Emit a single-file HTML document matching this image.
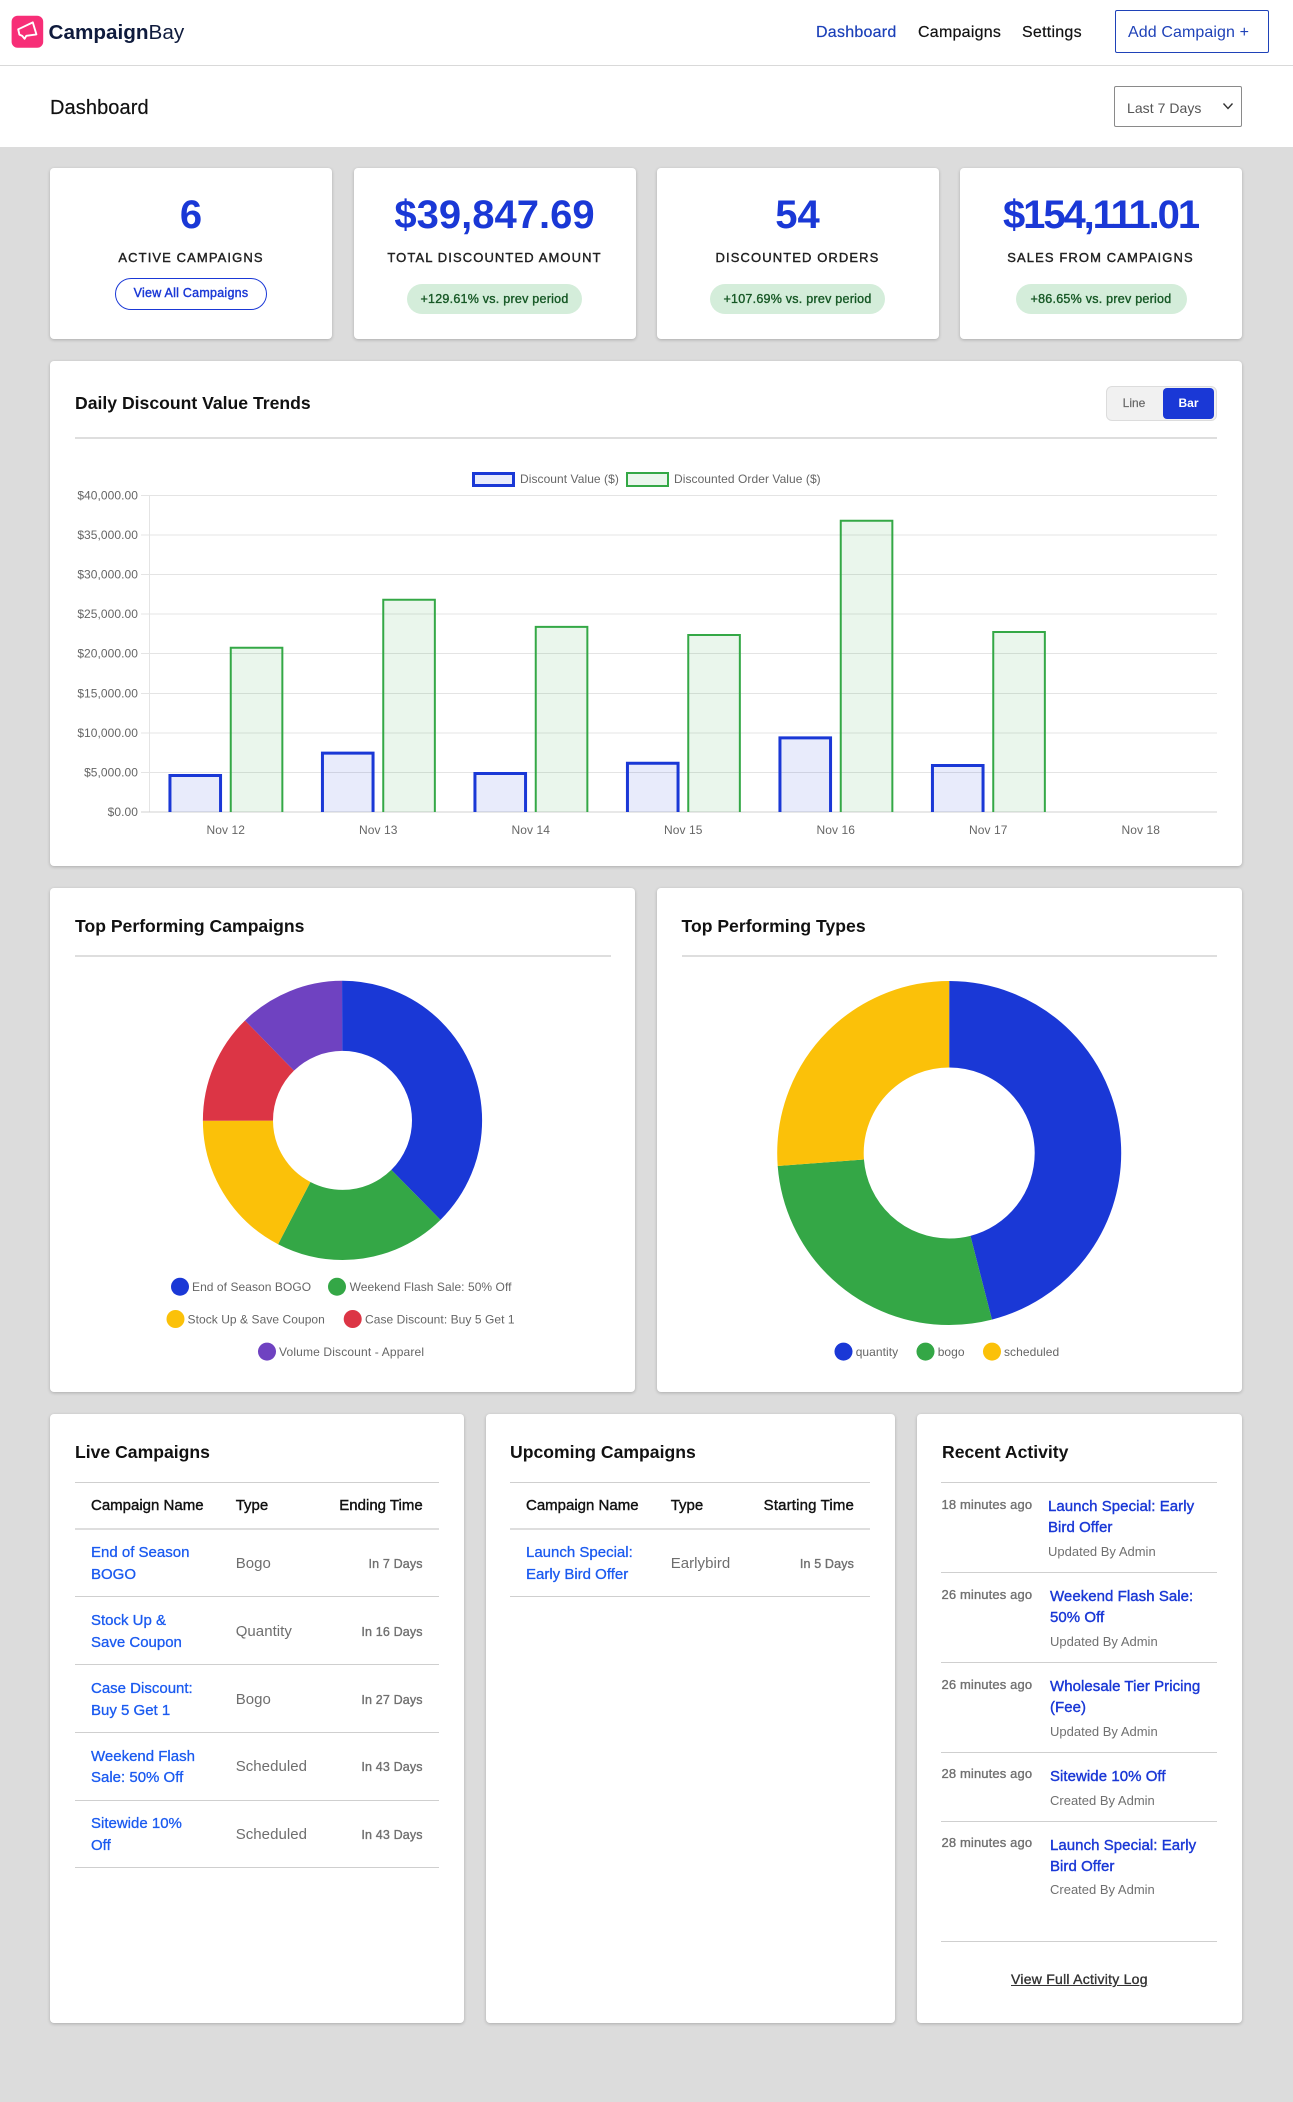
<!DOCTYPE html>
<html><head><meta charset="utf-8"><title>Dashboard</title>
<style>
html,body{margin:0;padding:0}
body{width:1293px;height:2102px;background:#dcdcdc;position:relative;overflow:hidden;font-family:"Liberation Sans",sans-serif;color:#111;filter:blur(.3px)}
.b{position:absolute;box-sizing:border-box}
.card{position:absolute;box-sizing:border-box;background:#fff;border-radius:4px;box-shadow:0 1px 3px rgba(0,0,0,.22)}
.t{position:absolute;white-space:nowrap;line-height:20px}
.c{transform:translateX(-50%)}
.r{transform:translateX(-100%)}
.num{font-size:40px;font-weight:700;color:#1a38d6;line-height:40px}
.lab{font-size:13px;letter-spacing:1.1px;color:#222;-webkit-text-stroke:.4px #222}
.pill{position:absolute;background:#d4edda;border-radius:15px;height:30px;top:284px;text-align:center;line-height:30px;font-size:12.5px;color:#155724;-webkit-text-stroke:.35px #155724;letter-spacing:.25px;white-space:nowrap}
.h{font-size:17.6px;font-weight:700;color:#111}
.hr{position:absolute;height:2px;background:#dedede}
.ln{position:absolute;height:1px;background:#cfcfcf}
.th{font-size:15px;color:#111;-webkit-text-stroke:.4px #111}
.lk{font-size:15px;color:#1a5af0;-webkit-text-stroke:.3px #1a5af0;margin-top:1px}
.ty{font-size:15px;color:#6e6e6e;letter-spacing:.05px;margin-top:1px}
.tm{font-size:12.5px;color:#707070;-webkit-text-stroke:.35px #707070;letter-spacing:.15px}
.at{font-size:13px;color:#707070;-webkit-text-stroke:.35px #707070;letter-spacing:.13px}
.al{font-size:15px;color:#1a38d6;-webkit-text-stroke:.4px #1a38d6;letter-spacing:.05px;margin-top:1px}
.as{font-size:13px;color:#707070;margin-top:1px}
svg text{font-family:"Liberation Sans",sans-serif;font-size:12px;fill:#666;letter-spacing:.06px}
.nav{position:absolute;white-space:nowrap;line-height:20px;top:23px;font-size:16px;letter-spacing:.25px}
</style></head><body>

<!-- header -->
<div class="b" style="left:0;top:0;width:1293px;height:147px;background:#fff"></div>
<div class="b" style="left:0;top:65px;width:1293px;height:1px;background:#d9d9d9"></div>
<svg class="b" style="left:11px;top:15px" width="33" height="33" viewBox="11 15 33 33">
<rect x="11.6" y="15.7" width="31.6" height="32" rx="6" fill="#f72e77"/>
<path d="M18.2 29.3 L32.8 22.4 L36.4 34.4 L26.3 35.8 L24.6 38.8 L22.2 35.9 L19.4 34.6 Z" fill="none" stroke="#fff" stroke-width="1.9" stroke-linejoin="round"/>
</svg>
<div class="t" style="left:48.5px;top:21px;font-size:20.7px;line-height:24px;color:#0f1b3d;font-weight:700">Campaign<span style="font-weight:400">Bay</span></div>
<div class="nav" style="left:816px;color:#1a3fb8;-webkit-text-stroke:.2px #1a3fb8">Dashboard</div>
<div class="nav" style="left:918px;color:#111;-webkit-text-stroke:.2px #111">Campaigns</div>
<div class="nav" style="left:1022px;color:#111;-webkit-text-stroke:.2px #111">Settings</div>
<div class="b" style="left:1114.5px;top:10px;width:154px;height:43px;border:1.5px solid #1f42b8;border-radius:2px"></div>
<div class="t" style="left:1128px;top:23px;font-size:16px;color:#1f42b8;letter-spacing:.1px">Add Campaign +</div>
<div class="t" style="left:50px;top:96px;font-size:20px;line-height:24px;color:#111;-webkit-text-stroke:.2px #111;letter-spacing:.1px">Dashboard</div>
<div class="b" style="left:1114px;top:86px;width:128px;height:41px;border:1px solid #8a8a8a;border-radius:2px;background:#fff"></div>
<div class="t" style="left:1127px;top:98px;font-size:14px;color:#555;letter-spacing:.05px">Last 7 Days</div>
<svg class="b" style="left:1222px;top:102px" width="12" height="9"><path d="M1.5 1.5 L6 6.5 L10.5 1.5" fill="none" stroke="#333" stroke-width="1.4"/></svg>

<!-- stat cards -->
<div class="card" style="left:50px;top:168px;width:282px;height:171px"></div>
<div class="card" style="left:354px;top:168px;width:281.5px;height:171px"></div>
<div class="card" style="left:657px;top:168px;width:281.5px;height:171px"></div>
<div class="card" style="left:960px;top:168px;width:281.5px;height:171px"></div>

<div class="t num c" style="left:191px;top:195px">6</div>
<div class="t num c" style="left:494.5px;top:195px">$39,847.69</div>
<div class="t num c" style="left:797.5px;top:195px">54</div>
<div class="t num c" style="left:1100.5px;top:195px;letter-spacing:-2.1px">$154,111.01</div>
<div class="t lab c" style="left:191px;top:248px">ACTIVE CAMPAIGNS</div>
<div class="t lab c" style="left:494.5px;top:248px">TOTAL DISCOUNTED AMOUNT</div>
<div class="t lab c" style="left:797.5px;top:248px">DISCOUNTED ORDERS</div>
<div class="t lab c" style="left:1100.5px;top:248px">SALES FROM CAMPAIGNS</div>
<div class="b" style="left:115px;top:278px;width:152px;height:32px;border:1.5px solid #1a38d6;border-radius:16px;text-align:center;line-height:29px;font-size:12.5px;letter-spacing:.25px;color:#1a38d6;-webkit-text-stroke:.4px #1a38d6">View All Campaigns</div>
<div class="pill" style="left:407px;width:175px">+129.61% vs. prev period</div>
<div class="pill" style="left:710px;width:175px">+107.69% vs. prev period</div>
<div class="pill" style="left:1015.5px;width:171px">+86.65% vs. prev period</div>

<!-- chart card -->
<div class="card" style="left:50px;top:361px;width:1191.5px;height:504.5px"></div>
<div class="t h" style="left:75px;top:393px">Daily Discount Value Trends</div>
<div class="hr" style="left:75px;top:437px;width:1142px"></div>
<div class="b" style="left:1106px;top:385.5px;width:110.5px;height:35.5px;background:#f1f1f1;border:1px solid #dcdcdc;border-radius:6px"></div>
<div class="b" style="left:1163px;top:388px;width:51px;height:30.5px;background:#1a38d6;border-radius:4px;text-align:center;line-height:30px;font-size:12px;font-weight:700;color:#fff">Bar</div>
<div class="t c" style="left:1134px;top:393px;font-size:12px;color:#666;-webkit-text-stroke:.2px #666">Line</div>

<!-- mid cards -->
<div class="card" style="left:50px;top:887.5px;width:585px;height:504.5px"></div>
<div class="card" style="left:657px;top:887.5px;width:584.5px;height:504.5px"></div>
<div class="t h" style="left:75px;top:915.5px">Top Performing Campaigns</div>
<div class="t h" style="left:681.5px;top:915.5px">Top Performing Types</div>
<div class="hr" style="left:75px;top:955px;width:535.5px"></div>
<div class="hr" style="left:681.5px;top:955px;width:535.5px"></div>

<!-- svg charts -->
<svg class="b" style="left:0;top:0" width="1293" height="2102" viewBox="0 0 1293 2102">
<g stroke="#e4e4e4" stroke-width="1">
<path d="M141 495.5H1217M141 535H1217M141 574.5H1217M141 614H1217M141 653.5H1217M141 693.5H1217M141 733H1217M141 772.5H1217"/>
<path d="M149.5 495V812"/>
</g>
<path d="M141 812H1217" stroke="#d0d0d0" stroke-width="1"/>
<g fill="rgba(26,56,214,.1)" stroke="#1a38d6" stroke-width="3">
<path d="M169.95 812V775.5H220.55V812"/>
<path d="M322.45 812V753.1H373.05V812"/>
<path d="M474.95 812V773.5H525.55V812"/>
<path d="M627.45 812V763.3H678.05V812"/>
<path d="M779.95 812V737.9H830.55V812"/>
<path d="M932.45 812V765.5H983.05V812"/>
</g>
<g fill="rgba(52,168,70,.1)" stroke="#34a846" stroke-width="2">
<path d="M230.75 812V647.8H282.35V812"/>
<path d="M383.25 812V599.8H434.85V812"/>
<path d="M535.75 812V626.9H587.35V812"/>
<path d="M688.25 812V635H739.85V812"/>
<path d="M840.75 812V520.7H892.35V812"/>
<path d="M993.25 812V632H1044.85V812"/>
</g>
<rect x="473.5" y="473.5" width="40" height="12" fill="rgba(26,56,214,.1)" stroke="#1a38d6" stroke-width="3"/>
<rect x="627" y="473" width="41" height="13" fill="rgba(52,168,70,.1)" stroke="#34a846" stroke-width="2"/>
<text x="520" y="483">Discount Value ($)</text>
<text x="674" y="483">Discounted Order Value ($)</text>
<g text-anchor="end">
<text x="138" y="499.5">$40,000.00</text>
<text x="138" y="539">$35,000.00</text>
<text x="138" y="578.5">$30,000.00</text>
<text x="138" y="618">$25,000.00</text>
<text x="138" y="657.5">$20,000.00</text>
<text x="138" y="697.5">$15,000.00</text>
<text x="138" y="737">$10,000.00</text>
<text x="138" y="776.5">$5,000.00</text>
<text x="138" y="816">$0.00</text>
</g>
<g text-anchor="middle">
<text x="225.75" y="834">Nov 12</text>
<text x="378.25" y="834">Nov 13</text>
<text x="530.75" y="834">Nov 14</text>
<text x="683.25" y="834">Nov 15</text>
<text x="835.75" y="834">Nov 16</text>
<text x="988.25" y="834">Nov 17</text>
<text x="1140.75" y="834">Nov 18</text>
</g>

<!-- donut 1 -->
<g fill="none" stroke-width="70.1" transform="rotate(-90 342.5 1120.4)">
<circle cx="342.5" cy="1120.4" r="104.55" pathLength="360" stroke="#1a38d6" stroke-dasharray="135.5 224.5"/>
<circle cx="342.5" cy="1120.4" r="104.55" pathLength="360" stroke="#34a746" stroke-dasharray="72.1 287.9" stroke-dashoffset="-135.5"/>
<circle cx="342.5" cy="1120.4" r="104.55" pathLength="360" stroke="#fbc109" stroke-dasharray="62.4 297.6" stroke-dashoffset="-207.6"/>
<circle cx="342.5" cy="1120.4" r="104.55" pathLength="360" stroke="#dc3545" stroke-dasharray="45.9 314.1" stroke-dashoffset="-270"/>
<circle cx="342.5" cy="1120.4" r="104.55" pathLength="360" stroke="#6f42c1" stroke-dasharray="44.1 315.9" stroke-dashoffset="-315.9"/>
</g>
<circle cx="180" cy="1286.7" r="9" fill="#1a38d6"/><text x="192" y="1291">End of Season BOGO</text>
<circle cx="337" cy="1286.7" r="9" fill="#34a746"/><text x="349.6" y="1291">Weekend Flash Sale: 50% Off</text>
<circle cx="175.5" cy="1319" r="9" fill="#fbc109"/><text x="187.5" y="1323.3">Stock Up &amp; Save Coupon</text>
<circle cx="352.7" cy="1319" r="9" fill="#dc3545"/><text x="365" y="1323.3">Case Discount: Buy 5 Get 1</text>
<circle cx="267" cy="1351.6" r="9" fill="#6f42c1"/><text x="279" y="1356" style="letter-spacing:.15px">Volume Discount - Apparel</text>

<!-- donut 2 -->
<g fill="none" stroke-width="86.5" transform="rotate(-90 949.2 1153)">
<circle cx="949.2" cy="1153" r="128.75" pathLength="360" stroke="#1a38d6" stroke-dasharray="165.6 194.4"/>
<circle cx="949.2" cy="1153" r="128.75" pathLength="360" stroke="#34a746" stroke-dasharray="100.05 259.95" stroke-dashoffset="-165.6"/>
<circle cx="949.2" cy="1153" r="128.75" pathLength="360" stroke="#fbc109" stroke-dasharray="94.35 265.65" stroke-dashoffset="-265.65"/>
</g>
<circle cx="843.5" cy="1351.6" r="9" fill="#1a38d6"/><text x="855.7" y="1356">quantity</text>
<circle cx="925.5" cy="1351.6" r="9" fill="#34a746"/><text x="937.7" y="1356">bogo</text>
<circle cx="992" cy="1351.6" r="9" fill="#fbc109"/><text x="1004" y="1356">scheduled</text>
</svg>

<!-- bottom cards -->
<div class="card" style="left:50px;top:1414px;width:413.7px;height:608.5px"></div>
<div class="card" style="left:485.7px;top:1414px;width:409.3px;height:608.5px"></div>
<div class="card" style="left:916.7px;top:1414px;width:325px;height:608.5px"></div>

<!-- live -->
<div class="t h" style="left:75px;top:1442px">Live Campaigns</div>
<div class="ln" style="left:75px;top:1482px;width:364px"></div>
<div class="t th" style="left:91px;top:1496px">Campaign Name</div>
<div class="t th" style="left:235.7px;top:1496px">Type</div>
<div class="t th r" style="left:422.7px;top:1496px">Ending Time</div>
<div class="hr" style="left:75px;top:1528px;width:364px"></div>

<div class="t lk" style="left:91px;top:1542px">End of Season</div>
<div class="t lk" style="left:91px;top:1563.5px">BOGO</div>
<div class="t ty" style="left:235.7px;top:1553px">Bogo</div>
<div class="t tm r" style="left:422.7px;top:1554px">In 7 Days</div>
<div class="ln" style="left:75px;top:1596px;width:364px"></div>

<div class="t lk" style="left:91px;top:1610px">Stock Up &amp;</div>
<div class="t lk" style="left:91px;top:1631.5px">Save Coupon</div>
<div class="t ty" style="left:235.7px;top:1621px">Quantity</div>
<div class="t tm r" style="left:422.7px;top:1622px">In 16 Days</div>
<div class="ln" style="left:75px;top:1664px;width:364px"></div>

<div class="t lk" style="left:91px;top:1678px">Case Discount:</div>
<div class="t lk" style="left:91px;top:1699.5px">Buy 5 Get 1</div>
<div class="t ty" style="left:235.7px;top:1688.5px">Bogo</div>
<div class="t tm r" style="left:422.7px;top:1689.5px">In 27 Days</div>
<div class="ln" style="left:75px;top:1732px;width:364px"></div>

<div class="t lk" style="left:91px;top:1745.5px">Weekend Flash</div>
<div class="t lk" style="left:91px;top:1767px">Sale: 50% Off</div>
<div class="t ty" style="left:235.7px;top:1756px">Scheduled</div>
<div class="t tm r" style="left:422.7px;top:1757px">In 43 Days</div>
<div class="ln" style="left:75px;top:1799.5px;width:364px"></div>

<div class="t lk" style="left:91px;top:1813px">Sitewide 10%</div>
<div class="t lk" style="left:91px;top:1834.5px">Off</div>
<div class="t ty" style="left:235.7px;top:1824px">Scheduled</div>
<div class="t tm r" style="left:422.7px;top:1825px">In 43 Days</div>
<div class="ln" style="left:75px;top:1867px;width:364px"></div>

<!-- upcoming -->
<div class="t h" style="left:510px;top:1442px">Upcoming Campaigns</div>
<div class="ln" style="left:510px;top:1482px;width:360px"></div>
<div class="t th" style="left:526px;top:1496px">Campaign Name</div>
<div class="t th" style="left:670.7px;top:1496px">Type</div>
<div class="t th r" style="left:854px;top:1496px;letter-spacing:.15px">Starting Time</div>
<div class="hr" style="left:510px;top:1528px;width:360px"></div>
<div class="t lk" style="left:526px;top:1542px">Launch Special:</div>
<div class="t lk" style="left:526px;top:1563.5px">Early Bird Offer</div>
<div class="t ty" style="left:670.7px;top:1553px">Earlybird</div>
<div class="t tm r" style="left:854px;top:1554px">In 5 Days</div>
<div class="ln" style="left:510px;top:1596px;width:360px"></div>

<!-- recent -->
<div class="t h" style="left:942px;top:1442px">Recent Activity</div>
<div class="ln" style="left:941px;top:1482px;width:276px"></div>

<div class="t at" style="left:941.5px;top:1494.5px">18 minutes ago</div>
<div class="t al" style="left:1048px;top:1495.7px">Launch Special: Early</div>
<div class="t al" style="left:1048px;top:1517px">Bird Offer</div>
<div class="t as" style="left:1048px;top:1541px">Updated By Admin</div>
<div class="ln" style="left:941px;top:1572px;width:276px"></div>

<div class="t at" style="left:941.5px;top:1584.7px">26 minutes ago</div>
<div class="t al" style="left:1050px;top:1585.5px">Weekend Flash Sale:</div>
<div class="t al" style="left:1050px;top:1606.7px">50% Off</div>
<div class="t as" style="left:1050px;top:1631px">Updated By Admin</div>
<div class="ln" style="left:941px;top:1662px;width:276px"></div>

<div class="t at" style="left:941.5px;top:1674.5px">26 minutes ago</div>
<div class="t al" style="left:1050px;top:1675.7px">Wholesale Tier Pricing</div>
<div class="t al" style="left:1050px;top:1697px">(Fee)</div>
<div class="t as" style="left:1050px;top:1721px">Updated By Admin</div>
<div class="ln" style="left:941px;top:1752px;width:276px"></div>

<div class="t at" style="left:941.5px;top:1764.3px">28 minutes ago</div>
<div class="t al" style="left:1050px;top:1765.5px">Sitewide 10% Off</div>
<div class="t as" style="left:1050px;top:1789.6px">Created By Admin</div>
<div class="ln" style="left:941px;top:1821px;width:276px"></div>

<div class="t at" style="left:941.5px;top:1833.3px">28 minutes ago</div>
<div class="t al" style="left:1050px;top:1834.5px">Launch Special: Early</div>
<div class="t al" style="left:1050px;top:1855.7px">Bird Offer</div>
<div class="t as" style="left:1050px;top:1879.4px">Created By Admin</div>
<div class="ln" style="left:941px;top:1941px;width:276px"></div>

<div class="t" style="left:1011px;top:1969.4px;font-size:14px;letter-spacing:.25px;color:#333;-webkit-text-stroke:.35px #333;text-decoration:underline">View Full Activity Log</div>
</body></html>
